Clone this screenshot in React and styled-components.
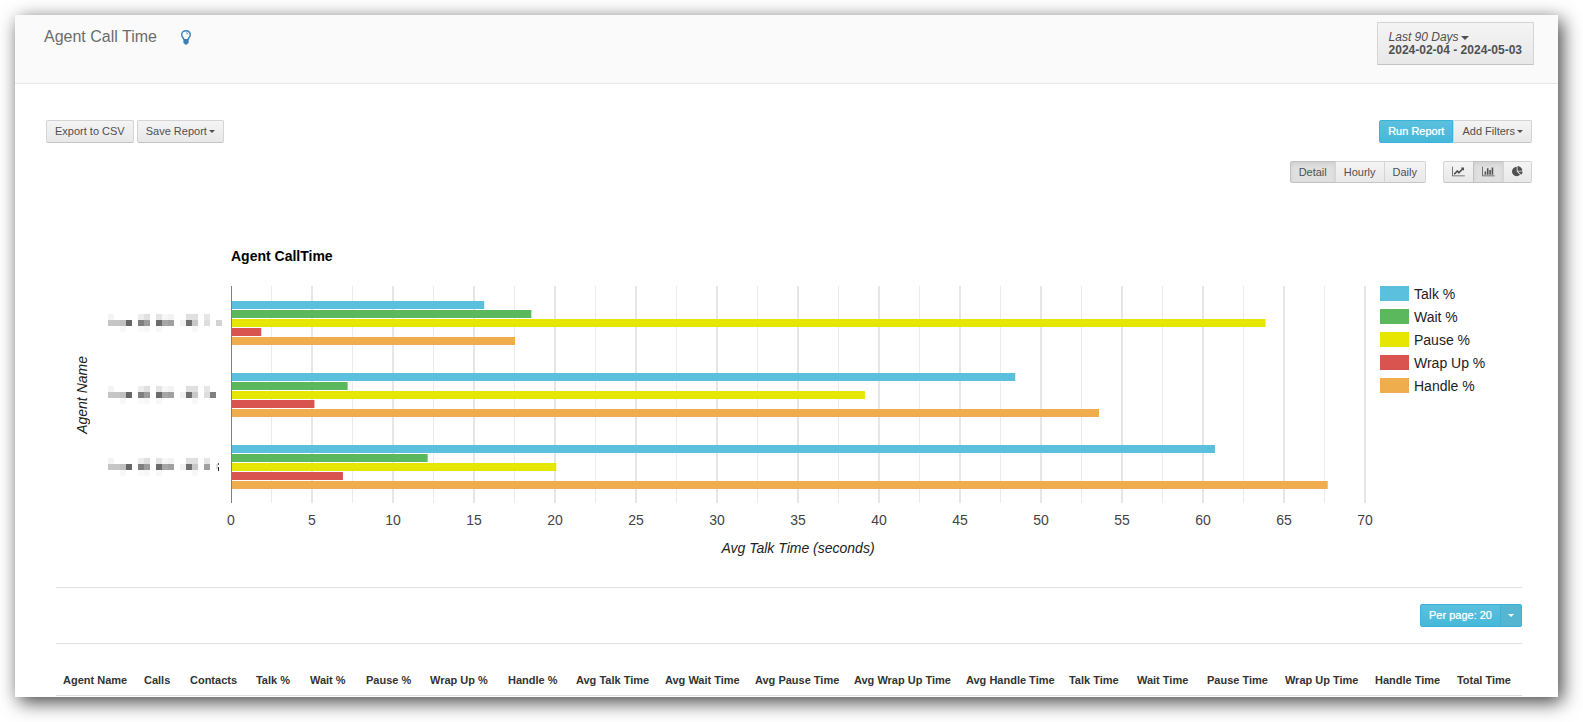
import React, { useState } from "react";
import styled, { createGlobalStyle, css } from "styled-components";

const GlobalStyle = createGlobalStyle`
    * {
        box-sizing: border-box;
    }

    body {
        margin: 0;
        background: #fff;
        color: #333;
        font-family: "Liberation Sans", Arial, sans-serif;
        font-size: 11px;
    }
`;

const SERIES = [
    { name: "Talk %", color: "#5bc0de" },
    { name: "Wait %", color: "#5cb85c" },
    { name: "Pause %", color: "#e6e600" },
    { name: "Wrap Up %", color: "#d9534f" },
    { name: "Handle %", color: "#f0ad4e" },
];

const AGENTS = [
    {
        id: 1,
        values: [15.63, 18.54, 63.86, 1.87, 17.53],
        tail: [[16, "#dedede"], [18, "#d4d4d4"]],
    },
    {
        id: 2,
        values: [48.41, 7.2, 39.13, 5.15, 53.58],
        tail: [[16, "#dedede"], [17, "#808080"]],
    },
    {
        id: 3,
        values: [60.74, 12.14, 20.08, 6.91, 67.7],
        tail: [[16, "#a0a0a0"]],
        mark: true,
    },
];

// [column, colour] for the three rows of a masked name
const MASK = [
    [
        [0, "#f4f4f4"], [5, "#ececec"], [6, "#dfdfdf"], [8, "#e4e4e4"],
        [9, "#f7f7f7"], [10, "#f2f2f2"], [13, "#dfdfdf"], [14, "#dfdfdf"],
        [16, "#e6e6e6"],
    ],
    [
        [0, "#c6c6c6"], [1, "#c6c6c6"], [2, "#c0c0c0"], [3, "#666"],
        [5, "#808080"], [6, "#9c9c9c"], [8, "#6b6b6b"], [9, "#a6a6a6"],
        [10, "#a0a0a0"], [12, "#f0f0f0"], [13, "#707070"], [14, "#c8c8c8"],
    ],
    [
        [2, "#f8f8f8"], [5, "#fafafa"], [6, "#f8f8f8"], [8, "#f8f8f8"],
        [14, "#f8f8f8"],
    ],
];

const COLUMNS = [
    ["Agent Name", 81],
    ["Calls", 46],
    ["Contacts", 66],
    ["Talk %", 54],
    ["Wait %", 56],
    ["Pause %", 64],
    ["Wrap Up %", 78],
    ["Handle %", 68],
    ["Avg Talk Time", 89],
    ["Avg Wait Time", 90],
    ["Avg Pause Time", 99],
    ["Avg Wrap Up Time", 112],
    ["Avg Handle Time", 103],
    ["Talk Time", 68],
    ["Wait Time", 70],
    ["Pause Time", 78],
    ["Wrap Up Time", 90],
    ["Handle Time", 82],
    ["Total Time", 72],
];
const COLUMNS_TOTAL = COLUMNS.reduce((sum, col) => sum + col[1], 0);

const MAX = 70;
const PLOT_HEIGHT = 217;

const Panel = styled.main`
    margin: 15px 25px 25px 15px;
    background: #fff;
    box-shadow: 4px 5px 18px rgba(0, 0, 0, 0.75);
`;

const Header = styled.header`
    display: flex;
    justify-content: space-between;
    align-items: flex-start;
    padding: 7px 24px 18px 29px;
    background: #fafafa;
    border-bottom: 1px solid #e7e7e7;
`;

const TitleGroup = styled.div`
    display: flex;
    align-items: center;
    gap: 24px;
    padding-top: 5px;
`;

const Title = styled.h1`
    margin: 0;
    color: #6c6c6c;
    font-size: 16px;
    line-height: 20px;
    font-weight: 300;
`;

const HintButton = styled.button`
    display: flex;
    padding: 0;
    border: 0;
    background: none;
    color: #3a80b5;
    cursor: pointer;
`;

const baseButton = css`
    border: 1px solid #d4d4d4;
    border-bottom-color: #c4c4c4;
    background: linear-gradient(#f4f4f4, #e8e8e8);
    color: #505050;
    font-family: inherit;
    font-size: 11px;
    cursor: pointer;
`;

const DateButton = styled.button`
    ${baseButton}
    padding: 8px 11px 7px;
    border-radius: 1px;
    font-size: 12px;
    line-height: 13px;
    text-align: left;

    em,
    strong {
        display: block;
    }
`;

const Button = styled.button`
    ${baseButton}
    display: inline-flex;
    align-items: center;
    justify-content: center;
    height: ${(props) => (props.$short ? 22 : 23)}px;
    padding: 0 8px 1px;
    border-radius: 2px;
    white-space: nowrap;

    ${(props) =>
        props.$active &&
        css`
            border-color: #c2c2c2;
            background: #e0e0e0;
            box-shadow: inset 0 2px 4px rgba(0, 0, 0, 0.08);
        `}

    ${(props) =>
        props.$info &&
        css`
            border-color: #39b3d7;
            background: linear-gradient(#5bc0de, #46b8da);
            color: #fff;
            text-shadow: 0 0 1px rgba(255, 255, 255, 0.7);
        `}
`;

const SplitButton = styled(Button)`
    padding: 0 7px;
    background: #56b6d1;
`;

const Caret = styled.span`
    display: inline-block;
    margin-left: ${(props) => (props.$alone ? 0 : 2)}px;
    vertical-align: middle;
    border-top: ${(props) => props.$size}px solid;
    border-left: ${(props) => props.$size}px solid transparent;
    border-right: ${(props) => props.$size}px solid transparent;
`;

const ButtonGroup = styled.div`
    display: flex;

    ${Button} {
        border-radius: 0;
    }

    ${Button}:first-child {
        border-radius: 2px 0 0 2px;
    }

    ${Button}:last-child {
        border-radius: 0 2px 2px 0;
    }

    ${Button} + ${Button} {
        margin-left: ${(props) => (props.$loose ? 0 : -1)}px;
    }
`;

const Toolbar = styled.div`
    display: flex;
    justify-content: space-between;
    padding: 36px 26px 0 31px;
`;

const Actions = styled.div`
    display: flex;
    gap: 3px;
`;

const ViewBar = styled.div`
    display: flex;
    justify-content: flex-end;
    gap: 17px;
    padding: 18px 26px 0;
`;

const Report = styled.div`
    padding: 0 36px 1px 41px;
`;

const Chart = styled.section`
    display: grid;
    grid-template-columns: 52px 123px 1fr 157px;
    padding-top: 64px;
    color: #222;
    font-size: 14px;
`;

const ChartTitle = styled.h2`
    grid-column: 3 / 5;
    margin: 0 0 21px;
    color: #000;
    font-size: 14px;
    line-height: 18px;
`;

const VerticalTitle = styled.div`
    display: flex;
    align-items: center;
    justify-content: center;
    height: ${PLOT_HEIGHT}px;

    span {
        writing-mode: vertical-rl;
        transform: rotate(180deg);
        font-style: italic;
        line-height: 18px;
        white-space: nowrap;
    }
`;

const Names = styled.div`
    display: flex;
    flex-direction: column;
    gap: 54px;
    padding-top: 28px;
`;

const Plot = styled.svg`
    display: block;
    width: 100%;
    height: ${PLOT_HEIGHT}px;
    overflow: visible;
`;

const Ticks = styled.div`
    display: flex;
    justify-content: space-between;
    padding-top: 8px;
    color: #444;
    line-height: 18px;

    span {
        display: flex;
        justify-content: center;
        width: 0;
    }
`;

const AxisTitle = styled.div`
    padding-top: 10px;
    font-style: italic;
    line-height: 18px;
    text-align: center;
`;

const Legend = styled.ul`
    margin: 0;
    padding: 0 0 0 15px;
    list-style: none;
`;

const LegendItem = styled.li`
    display: flex;
    align-items: center;
    gap: 5px;
    height: 15px;
    margin-bottom: 8px;
    white-space: nowrap;

    &::before {
        content: "";
        width: 29px;
        height: 15px;
        background: ${(props) => props.$color};
    }
`;

const Pager = styled.div`
    display: flex;
    justify-content: flex-end;
    margin-top: 30px;
    padding: 16px 0;
    border-top: 1px solid #e1e1e1;
    border-bottom: 1px solid #e1e1e1;
`;

const Table = styled.table`
    width: 100%;
    margin-top: 26px;
    border-collapse: collapse;
    table-layout: fixed;

    th {
        padding: 3px 0 8px 7px;
        border-bottom: 1px solid #ddd;
        font-size: 11px;
        line-height: 14px;
        text-align: left;
        white-space: nowrap;
    }
`;

function BulbIcon() {
    return (
        <svg width="10" height="15" viewBox="0 0 10 15" aria-hidden="true">
            <path
                d="M3 9.600C2.800 8 .7 7.100.7 4.700A4.300 4 0 0 1 9.300 4.700C9.300 7.100 7.200 8 7 9.600Z"
                fill="none"
                stroke="currentColor"
                strokeWidth="1.4"
            />
            <path
                d="M5 2.800Q6.600 2.800 7 4.300"
                fill="none"
                stroke="currentColor"
                strokeWidth=".8"
            />
            <path
                d="M2.400 9.300H7.600V12.800Q7.400 13.500 6.500 13.700Q6 14.700 5 14.700T3.500 13.700Q2.600 13.500 2.400 12.800Z"
                fill="currentColor"
            />
        </svg>
    );
}

function LineIcon() {
    return (
        <svg width="13" height="11" viewBox="0 0 2048 1792" aria-hidden="true">
            <path
                fill="currentColor"
                d="M2048 1536v128H0V128h128v1408h1920zM1920 288v435q0 21-19.500 29.500T1865 745l-121-121-633 633q-10 10-23 10t-23-10l-233-233-416 416-192-192 585-585q10-10 23-10t23 10l233 233 464-464-121-121q-16-16-7.500-35.500T1581 256h307q14 0 23 9t9 23z"
            />
        </svg>
    );
}

function BarIcon() {
    return (
        <svg width="13" height="11" viewBox="0 0 2048 1792" aria-hidden="true">
            <path
                fill="currentColor"
                d="M640 896v512H384V896h256zm384-512v1024H768V384h256zm1024 1152v128H0V128h128v1408h1920zm-640-896v768h-256V640h256zm384-384v1152h-256V256h256z"
            />
        </svg>
    );
}

function PieIcon() {
    return (
        <svg width="11" height="11" viewBox="0 0 1792 1792" aria-hidden="true">
            <path
                fill="currentColor"
                d="M768 890l546 546q-106 108-247.500 168T768 1664q-209 0-385.500-103T103 1281.500 0 896t103-385.500T382.500 231 768 128v762zm187 6h773q0 157-60 298.500T1500 1442zm709-128H896V0q209 0 385.500 103T1561 382.500 1664 768z"
            />
        </svg>
    );
}

function MaskedName({ agent }) {
    const rows = [MASK[0], [...MASK[1], ...agent.tail], MASK[2]];

    return (
        <svg width="120" height="18" shapeRendering="crispEdges" aria-hidden="true">
            {rows.map((row, y) =>
                row.map(([x, fill]) => (
                    <rect
                        key={x + "-" + y}
                        x={x * 6}
                        y={y * 6}
                        width="6"
                        height="6"
                        fill={fill}
                    />
                ))
            )}
            {agent.mark && (
                <>
                    <rect x="108" y="6" width="2" height="5" fill="#ddd" />
                    <rect x="110" y="5" width="1" height="2" fill="#555" />
                    <rect x="110" y="9" width="1" height="4" fill="#222" />
                </>
            )}
        </svg>
    );
}

function BarPlot() {
    const lines = [];
    for (let v = 2.5; v <= MAX; v += 2.5) {
        lines.push(v);
    }
    const percent = (v) => (v / MAX) * 100 + "%";

    return (
        <Plot role="img" aria-label="Agent CallTime">
            {lines.map((v) => (
                <line
                    key={v}
                    x1={percent(v)}
                    x2={percent(v)}
                    y1="0"
                    y2={PLOT_HEIGHT}
                    stroke={v % 5 ? "#ebebeb" : "#e6e6e6"}
                    strokeWidth={v % 5 ? 1 : 2}
                />
            ))}
            {AGENTS.map((agent, i) =>
                agent.values.map((value, j) => (
                    <rect
                        key={agent.id + SERIES[j].name}
                        x="0"
                        y={15 + i * 72 + j * 9}
                        width={percent(value)}
                        height="8"
                        fill={SERIES[j].color}
                    />
                ))
            )}
            <rect width="1" height={PLOT_HEIGHT} fill="#808080" />
        </Plot>
    );
}

function App() {
    const [period, setPeriod] = useState("Detail");
    const [view, setView] = useState("Bar chart");

    const views = [
        { name: "Line chart", icon: <LineIcon /> },
        { name: "Bar chart", icon: <BarIcon /> },
        { name: "Pie chart", icon: <PieIcon /> },
    ];

    const ticks = [];
    for (let v = 0; v <= MAX; v += 5) {
        ticks.push(v);
    }

    return (
        <>
            <GlobalStyle />
            <Panel>
                <Header>
                    <TitleGroup>
                        <Title>Agent Call Time</Title>
                        <HintButton type="button" aria-label="Hint">
                            <BulbIcon />
                        </HintButton>
                    </TitleGroup>
                    <DateButton type="button">
                        <em>
                            Last 90 Days
                            <Caret $size={4} />
                        </em>
                        <strong>2024-02-04 - 2024-05-03</strong>
                    </DateButton>
                </Header>

                <Toolbar>
                    <Actions>
                        <Button type="button">Export to CSV</Button>
                        <Button type="button">
                            Save Report
                            <Caret $size={3} />
                        </Button>
                    </Actions>
                    <ButtonGroup $loose>
                        <Button type="button" $info>
                            Run Report
                        </Button>
                        <Button type="button">
                            Add Filters
                            <Caret $size={3} />
                        </Button>
                    </ButtonGroup>
                </Toolbar>

                <ViewBar>
                    <ButtonGroup>
                        {["Detail", "Hourly", "Daily"].map((name) => (
                            <Button
                                key={name}
                                type="button"
                                $short
                                $active={period === name}
                                onClick={() => setPeriod(name)}
                            >
                                {name}
                            </Button>
                        ))}
                    </ButtonGroup>
                    <ButtonGroup>
                        {views.map((item) => (
                            <Button
                                key={item.name}
                                type="button"
                                aria-label={item.name}
                                $short
                                $active={view === item.name}
                                onClick={() => setView(item.name)}
                            >
                                {item.icon}
                            </Button>
                        ))}
                    </ButtonGroup>
                </ViewBar>

                <Report>
                    <Chart>
                        <ChartTitle>Agent CallTime</ChartTitle>
                        <VerticalTitle>
                            <span>Agent Name</span>
                        </VerticalTitle>
                        <Names>
                            {AGENTS.map((agent) => (
                                <MaskedName key={agent.id} agent={agent} />
                            ))}
                        </Names>
                        <div>
                            <BarPlot />
                            <Ticks>
                                {ticks.map((v) => (
                                    <span key={v}>{v}</span>
                                ))}
                            </Ticks>
                            <AxisTitle>Avg Talk Time (seconds)</AxisTitle>
                        </div>
                        <Legend>
                            {SERIES.map((item) => (
                                <LegendItem key={item.name} $color={item.color}>
                                    {item.name}
                                </LegendItem>
                            ))}
                        </Legend>
                    </Chart>

                    <Pager>
                        <ButtonGroup>
                            <Button type="button" $info>
                                Per page: 20
                            </Button>
                            <SplitButton
                                type="button"
                                $info
                                aria-label="Change page size"
                            >
                                <Caret $size={3} $alone />
                            </SplitButton>
                        </ButtonGroup>
                    </Pager>

                    <Table>
                        <colgroup>
                            {COLUMNS.map(([name, width]) => (
                                <col
                                    key={name}
                                    style={{
                                        width:
                                            (width / COLUMNS_TOTAL) * 100 + "%",
                                    }}
                                />
                            ))}
                        </colgroup>
                        <thead>
                            <tr>
                                {COLUMNS.map(([name]) => (
                                    <th key={name} scope="col">
                                        {name}
                                    </th>
                                ))}
                            </tr>
                        </thead>
                    </Table>
                </Report>
            </Panel>
        </>
    );
}

export default App;
